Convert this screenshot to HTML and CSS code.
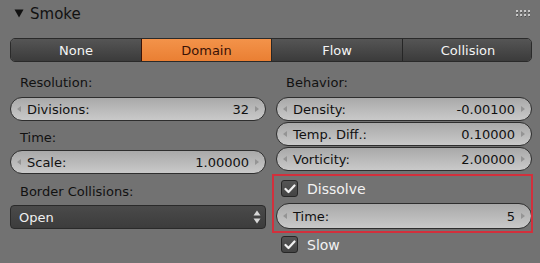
FILE: index.html
```html
<!DOCTYPE html>
<html>
<head>
<meta charset="utf-8">
<link rel="stylesheet" href="styles.css">
</head>
<body>
<div class="panel">
  <div class="header">
    <svg class="tri" width="10" height="9" viewBox="0 0 10 9"><polygon points="0.5,0.5 9.5,0.5 5,8.5" fill="#111"/></svg>
    <span class="title">Smoke</span>
    <svg class="grip" width="14" height="7" viewBox="0 0 14 7">
      <g fill="#c8c8c8">
        <rect x="0" y="0" width="2" height="2"/><rect x="4" y="0" width="2" height="2"/><rect x="8" y="0" width="2" height="2"/><rect x="12" y="0" width="2" height="2"/>
        <rect x="0" y="4" width="2" height="2"/><rect x="4" y="4" width="2" height="2"/><rect x="8" y="4" width="2" height="2"/><rect x="12" y="4" width="2" height="2"/>
      </g>
      <g fill="#4a4a4a">
        <rect x="1" y="2" width="1" height="1"/><rect x="5" y="2" width="1" height="1"/><rect x="9" y="2" width="1" height="1"/><rect x="13" y="2" width="1" height="1"/>
        <rect x="1" y="6" width="1" height="1"/><rect x="5" y="6" width="1" height="1"/><rect x="9" y="6" width="1" height="1"/><rect x="13" y="6" width="1" height="1"/>
      </g>
    </svg>
  </div>

  <div class="tabs">
    <div class="tab">None</div>
    <div class="tab active">Domain</div>
    <div class="tab">Flow</div>
    <div class="tab">Collision</div>
  </div>

  <div class="cols">
    <div class="col">
      <div class="label">Resolution:</div>
      <div class="num"><span class="arr l"></span><span class="k">Divisions:</span><span class="v">32</span><span class="arr r"></span></div>
      <div class="label gap">Time:</div>
      <div class="num"><span class="arr l"></span><span class="k">Scale:</span><span class="v">1.00000</span><span class="arr r"></span></div>
      <div class="label gap2">Border Collisions:</div>
      <div class="menu"><span>Open</span>
        <svg class="updown" width="8" height="14" viewBox="0 0 8 14"><polygon points="4,0.5 7.5,5.5 0.5,5.5" fill="#d8d8d8"/><polygon points="0.5,8.5 7.5,8.5 4,13.5" fill="#d8d8d8"/></svg>
      </div>
    </div>
    <div class="col">
      <div class="label">Behavior:</div>
      <div class="stack">
        <div class="num"><span class="arr l"></span><span class="k">Density:</span><span class="v">-0.00100</span><span class="arr r"></span></div>
        <div class="num"><span class="arr l"></span><span class="k">Temp. Diff.:</span><span class="v">0.10000</span><span class="arr r"></span></div>
        <div class="num"><span class="arr l"></span><span class="k">Vorticity:</span><span class="v">2.00000</span><span class="arr r"></span></div>
      </div>
      <div class="highlight">
        <div class="check-row"><span class="box"><svg width="12" height="10" viewBox="0 0 12 10"><polyline points="1.5,5 4.5,8 10.5,1.5" fill="none" stroke="#f2f2f2" stroke-width="2.2" stroke-linecap="round" stroke-linejoin="round"/></svg></span><span class="ck">Dissolve</span></div>
        <div class="num tall"><span class="arr l"></span><span class="k">Time:</span><span class="v">5</span><span class="arr r"></span></div>
      </div>
      <div class="check-row slow"><span class="box"><svg width="12" height="10" viewBox="0 0 12 10"><polyline points="1.5,5 4.5,8 10.5,1.5" fill="none" stroke="#f2f2f2" stroke-width="2.2" stroke-linecap="round" stroke-linejoin="round"/></svg></span><span class="ck">Slow</span></div>
    </div>
  </div>
</div>
</body>
</html>
```
FILE: styles.css
```css
html, body {
  margin: 0;
  padding: 0;
  background: #727272;
  width: 540px;
  height: 263px;
  overflow: hidden;
}
body {
  font-family: "DejaVu Sans", sans-serif;
  font-size: 13px;
  color: #111;
}
.panel {
  padding: 0 8px 0 10px;
}
.header {
  height: 28px;
  display: flex;
  align-items: center;
  position: relative;
}
.tri {
  margin-left: 4px;
  margin-right: 6px;
  margin-top: -1px;
}
.title {
  font-size: 15px;
  color: #111;
}
.grip {
  margin-left: auto;
  margin-right: 2px;
  margin-top: -2px;
}
.tabs {
  margin-top: 10px;
  display: grid;
  grid-template-columns: 130px 130px 131px 131px;
  height: 24px;
  border: 1px solid #2a2a2a;
  border-radius: 5px;
  overflow: hidden;
  box-sizing: border-box;
}
.tab {
  display: flex;
  align-items: center;
  justify-content: center;
  color: #f4f4f4;
  background: linear-gradient(#555555, #3b3b3b);
  border-left: 1px solid #262626;
}
.tab:first-child { border-left: none; }
.tab.active {
  background: linear-gradient(#f3934a, #ea7f33);
  color: #3a1206;
  border-left: 1px solid #3a1206;
}
.cols {
  display: grid;
  grid-template-columns: 256px 256px;
  column-gap: 10px;
  margin-top: 9px;
}
.col {
  display: flex;
  flex-direction: column;
}
.label {
  height: 24px;
  line-height: 24px;
  padding-left: 10px;
  margin-bottom: 2px;
}
.label.gap { margin-top: 5px; margin-bottom: 0; }
.label.gap2 { margin-top: 6px; margin-bottom: 1px; }
.stack {
  display: flex;
  flex-direction: column;
  gap: 1px;
}
.num {
  height: 24px;
  box-sizing: border-box;
  border: 1px solid #2e2e2e;
  border-radius: 12px;
  background: linear-gradient(#a9a9a9, #c9c9c9);
  display: flex;
  align-items: center;
  padding: 0 6px;
  color: #111;
}
.num.tall { height: 26px; border-radius: 13px; }
.num .k { margin-left: 6px; flex: 1; }
.num .v { margin-right: 6px; }
.arr {
  width: 0;
  height: 0;
  border-top: 3.5px solid transparent;
  border-bottom: 3.5px solid transparent;
}
.arr.l { border-right: 4px solid #949494; }
.arr.r { border-left: 4px solid #949494; }
.menu {
  height: 24px;
  box-sizing: border-box;
  border: 1px solid #2a2a2a;
  border-radius: 4px;
  background: linear-gradient(#4a4a4a, #3c3c3c);
  color: #f0f0f0;
  display: flex;
  align-items: center;
  justify-content: space-between;
  padding: 0 4px 0 8px;
}
.highlight {
  position: relative;
  margin-top: 3px;
  padding: 3px 0 4px 0;
}
.highlight::after {
  content: "";
  position: absolute;
  left: -4px;
  right: -1px;
  top: 0;
  bottom: 0;
  border: 2px solid #d2303c;
  pointer-events: none;
}
.check-row {
  height: 23px;
  display: flex;
  align-items: center;
  padding-left: 5px;
  margin-bottom: 3px;
}
.check-row.slow { margin-top: 0; }
.box {
  width: 17px;
  height: 17px;
  box-sizing: border-box;
  border: 1px solid #262626;
  border-radius: 3px;
  background: linear-gradient(#555555, #444444);
  display: flex;
  align-items: center;
  justify-content: center;
}
.ck {
  color: #f2f2f2;
  margin-left: 9px;
  font-size: 14px;
}
```
